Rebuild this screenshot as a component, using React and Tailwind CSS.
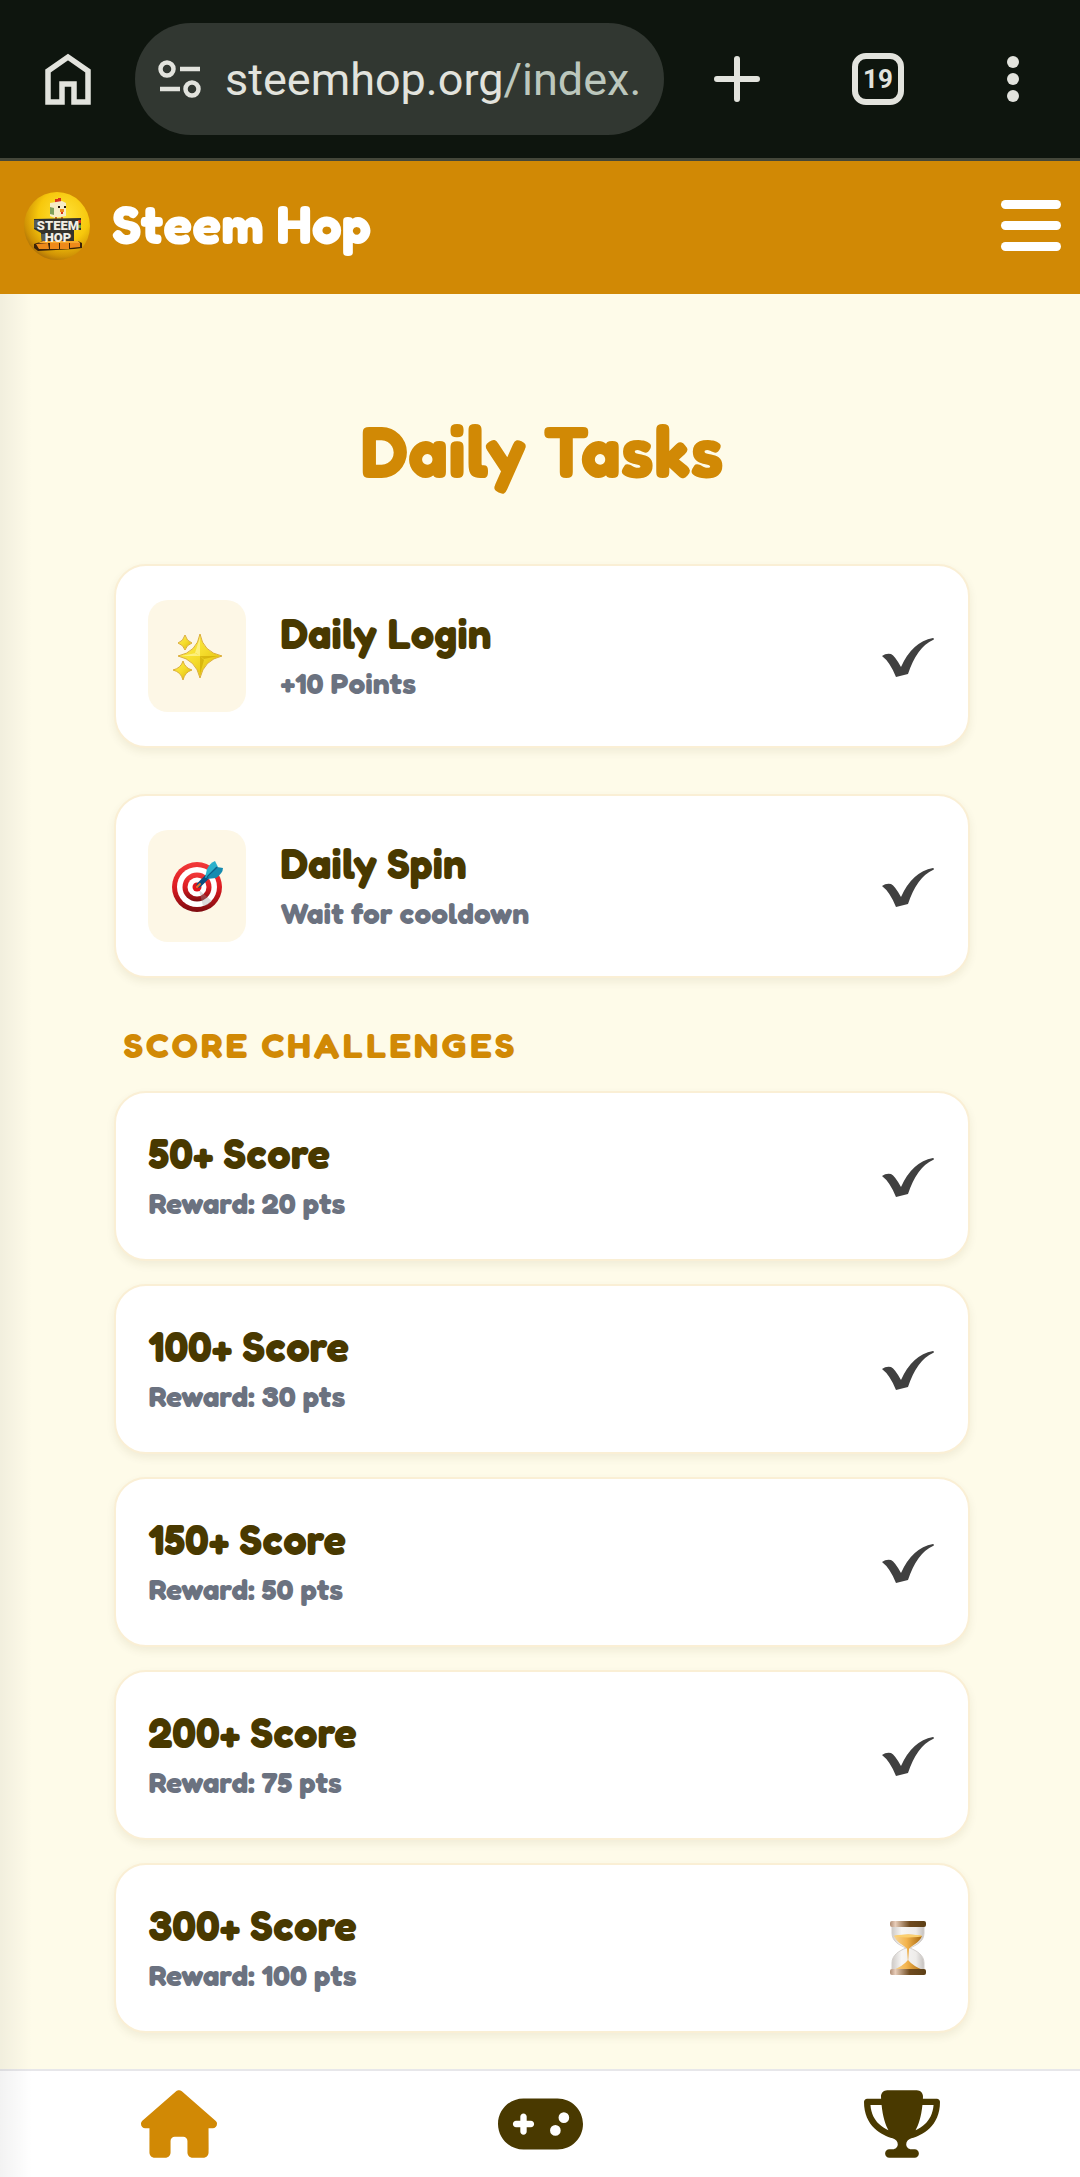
import React, { useState } from 'react';
import { FaHouse, FaGamepad, FaTrophy } from 'react-icons/fa6';

const DAILY_TASKS = [
  { id: 'login', title: 'Daily Login', note: '+10 Points', icon: Sparkles },
  { id: 'spin', title: 'Daily Spin', note: 'Wait for cooldown', icon: Target },
];

const CHALLENGES = [
  { score: 50, reward: 20, done: true },
  { score: 100, reward: 30, done: true },
  { score: 150, reward: 50, done: true },
  { score: 200, reward: 75, done: true },
  { score: 300, reward: 100, done: false },
];

const TABS = [
  { id: 'home', label: 'Home', icon: FaHouse, size: 'h-[68px] w-[76px]' },
  { id: 'play', label: 'Play', icon: FaGamepad, size: 'h-[68px] w-[85px]' },
  { id: 'ranks', label: 'Leaderboard', icon: FaTrophy, size: 'h-[68px] w-[76px]' },
];

function Sparkles() {
  return (
    <svg viewBox="0 0 52 52" className="size-[52px]" aria-hidden="true">
      <defs>
        <linearGradient id="spark" x1="0" y1="0" x2="1" y2="1">
          <stop offset="0" stopColor="#fff04f" />
          <stop offset="0.5" stopColor="#f5dc2c" />
          <stop offset="1" stopColor="#d9b200" />
        </linearGradient>
      </defs>
      <g fill="url(#spark)" stroke="#dcae3a" strokeWidth="1" strokeLinejoin="round">
        <path d="M29 4 Q32 22 51 26 Q33 30 29 48 Q25 30 7 26 Q26 22 29 4Z" />
        <path d="M14 5 Q15.500 11 21 13 Q15.500 15 14 20 Q12.500 15 7 13 Q12.500 11 14 5Z" />
        <path d="M12 31 Q14 38 21 40 Q14 42 12 50 Q10 42 2 40 Q10 38 12 31Z" />
      </g>
      <path d="M29 7 L29 26 L24 23Z M10 26 L29 26 L25 23Z" fill="#fff6a0" opacity="0.7" />
      <path d="M29 26 L47 26 L33 29Z M29 26 L29 44 L33 30Z" fill="#c9a300" opacity="0.6" />
    </svg>
  );
}

function Target() {
  return (
    <svg viewBox="0 0 52 52" className="size-[52px]" aria-hidden="true">
      <defs>
        <linearGradient id="ring" x1="0" y1="0" x2="0" y2="1">
          <stop offset="0" stopColor="#f23a3a" />
          <stop offset="0.5" stopColor="#dd1c22" />
          <stop offset="1" stopColor="#7d0b10" />
        </linearGradient>
      </defs>
      <circle cx="26" cy="27" r="25" fill="url(#ring)" />
      <circle cx="26" cy="27" r="20" fill="#fff" />
      <circle cx="26" cy="27" r="14.500" fill="url(#ring)" />
      <circle cx="26" cy="27" r="9.500" fill="#fff" />
      <path d="M28 30 L41 41 Q37 46 32 46 Z" fill="#9b9b9b" opacity="0.35" />
      <circle cx="26" cy="27" r="4.500" fill="#e0131c" />
      <path d="M28 25 L40 13" stroke="#0b4f80" strokeWidth="5" strokeLinecap="round" />
      <path d="M26 27 L29 24" stroke="#e8742a" strokeWidth="2" strokeLinecap="round" />
      <path d="M34 18 L36 9 Q39 3 44 1 L47 7 L40 16Z" fill="#2bb0cb" />
      <path d="M36 19 L46 7 L52 8 Q52 13 45 18Z" fill="#168bb0" />
      <path d="M36 17 L46 7" stroke="#0c5f88" strokeWidth="1.500" />
    </svg>
  );
}

function CheckMark() {
  return (
    <svg viewBox="0 -4 52 44" className="h-11 w-[52px]" role="img" aria-label="Completed">
      <path
        d="M0 18 Q4 15 9 16 Q13 18 19 29 Q30 4 51 0 Q53 1 51 2 Q35 9 26 36 L14 39 Q8 24 0 18Z"
        fill="#404040"
      />
    </svg>
  );
}

function Hourglass() {
  return (
    <svg viewBox="0 0 52 54" className="h-[54px] w-[52px]" role="img" aria-label="Pending">
      <defs>
        <linearGradient id="wood">
          <stop offset="0" stopColor="#b08d74" />
          <stop offset="0.15" stopColor="#e8cdb9" />
          <stop offset="0.55" stopColor="#6f4a1e" />
          <stop offset="1" stopColor="#5d4016" />
        </linearGradient>
        <linearGradient id="sand">
          <stop offset="0" stopColor="#f7d596" />
          <stop offset="0.45" stopColor="#f3b44e" />
          <stop offset="1" stopColor="#a9690f" />
        </linearGradient>
        <linearGradient id="glass">
          <stop offset="0" stopColor="#cfcbc8" />
          <stop offset="0.3" stopColor="#f7f6f5" />
          <stop offset="0.75" stopColor="#eeecea" />
          <stop offset="1" stopColor="#c5c1be" />
        </linearGradient>
      </defs>
      <path
        d="M10 5 H42 V12 C42 21 34 24 28 27 C35 30 42 34 42 42 V49 H10 V42 C10 34 17 30 24 27 C18 24 10 21 10 12Z"
        fill="url(#glass)"
        stroke="#d3cfcc"
        strokeWidth="1"
      />
      <path d="M12 15 Q26 12 40 15 C37 22 30 24 27 28 L26 42 L25 28 C22 24 15 22 12 15Z" fill="url(#sand)" />
      <ellipse cx="26" cy="15" rx="14" ry="1.500" fill="#fbd070" />
      <path d="M11 49 Q21 45 26 39 Q31 45 41 49Z" fill="url(#sand)" />
      <rect x="8" y="0" width="36" height="6" rx="2" fill="url(#wood)" />
      <rect x="8" y="48" width="36" height="6" rx="2" fill="url(#wood)" />
    </svg>
  );
}

function Logo() {
  return (
    <svg viewBox="0 0 66 68" className="h-[68px] w-[66px]" role="img" aria-label="Steem Hop logo">
      <defs>
        <radialGradient id="ball" cx="0.6" cy="0.35" r="0.7">
          <stop offset="0" stopColor="#ffe23a" />
          <stop offset="0.55" stopColor="#f7c80c" />
          <stop offset="0.85" stopColor="#d09305" />
          <stop offset="1" stopColor="#a86c08" />
        </radialGradient>
      </defs>
      <ellipse cx="33" cy="34" rx="33" ry="34" fill="url(#ball)" />
      <path d="M31 10 V7 H34 V6 H37 V11 H31Z" fill="#d8321c" />
      <path d="M26 11 L38 9 L42 11 V24 L31 26 L26 24Z" fill="#f6ecc6" />
      <path d="M26 15 L30 16 V23 L26 22Z" fill="#7fa05c" />
      <path d="M34 14 H36 V16 H34Z M40 14 H42 V16 H40Z" fill="#2a1a10" />
      <path d="M36 17 H40 V20 H36Z" fill="#f08a1c" />
      <path d="M37 20 H39 V22 H37Z" fill="#d8321c" />
      <path d="M31 25 H33 V28 H31Z M37 25 H39 V28 H37Z" fill="#d56a10" />
      <path d="M10 27 L57 26 V38 H50 V52 H18 L17 41 L10 37Z" fill="#34332c" />
      <path d="M10 28 H15 V36 H10Z M17 42 H22 V49 H18Z" fill="#555a55" />
      <rect x="54" y="28" width="3" height="3" fill="#d8321c" />
      <rect x="54" y="33" width="3" height="3" fill="#67a13a" />
      <path d="M10 52 L19 49 H54 L58 51 V56 L50 57 L14 59 L10 56Z" fill="#3a2208" />
      <path d="M12 52 L24 51 L25 57 L15 57Z M26 51 H35 V57 H26Z M36 51 H45 V57 H36Z M46 50 L56 51 V55 L46 56Z" fill="#ee8a1a" />
      <path d="M19 49 H54 L56 51 H14Z" fill="#f6a82e" />
      <text x="34" y="38" textAnchor="middle" fontFamily="Roboto, sans-serif" fontWeight="900" fontSize="13" fill="#f1eee4">
        STEEM
      </text>
      <text x="34" y="50" textAnchor="middle" fontFamily="Roboto, sans-serif" fontWeight="900" fontSize="13" fill="#f1eee4">
        HOP
      </text>
    </svg>
  );
}

function BrowserBar() {
  return (
    <div className="flex h-[161px] items-center border-b-[3px] border-[#44473a] bg-[#0e150e] font-['Roboto',sans-serif] text-[#e2e3dd]">
      <button type="button" aria-label="Home page" className="flex w-[135px] shrink-0 justify-center">
        <svg viewBox="0 0 46 52" className="h-[52px] w-[46px]" fill="none" stroke="currentColor" strokeWidth="5.500">
          <path d="M3 18 L23 4 L43 18 V49 H29 V31 H17 V49 H3Z" />
        </svg>
      </button>
      <button
        type="button"
        aria-label="Address bar"
        className="flex h-28 min-w-0 flex-1 items-center gap-6 overflow-hidden rounded-full bg-[#313731] pl-[22px]"
      >
        <svg viewBox="0 0 44 38" className="h-[38px] w-11 shrink-0" fill="none" stroke="currentColor" strokeWidth="4.500">
          <circle cx="10" cy="9" r="6.500" />
          <path d="M23 9 H43 M3 29 H23" />
          <circle cx="35" cy="29" r="6.500" />
        </svg>
        <span className="text-[45px] leading-none whitespace-nowrap">
          steemhop.org<span className="text-[#bcc7bd]">/index.</span>
        </span>
      </button>
      <button type="button" aria-label="New tab" className="flex w-[146px] shrink-0 justify-center">
        <svg viewBox="0 0 46 46" className="size-[46px]" stroke="currentColor" strokeWidth="6" strokeLinecap="round">
          <path d="M23 3 V43 M3 23 H43" />
        </svg>
      </button>
      <button type="button" aria-label="Open tabs" className="flex w-[136px] shrink-0 justify-center">
        <span className="flex size-[52px] items-center justify-center rounded-[14px] border-[6px] border-current text-[26px] font-bold">
          19
        </span>
      </button>
      <button type="button" aria-label="Browser menu" className="flex w-[134px] shrink-0 justify-center">
        <svg viewBox="0 0 12 46" className="h-[46px] w-3" fill="currentColor">
          <circle cx="6" cy="6" r="6" />
          <circle cx="6" cy="23" r="6" />
          <circle cx="6" cy="40" r="6" />
        </svg>
      </button>
    </div>
  );
}

function Card({ children }) {
  return (
    <li className="flex items-center gap-[34px] rounded-[32px] border-2 border-[#faefd5] bg-white py-[34px] pr-[34px] pl-8 shadow-[0_4px_8px_rgba(80,60,0,0.08)]">
      {children}
    </li>
  );
}

function CardText({ title, note }) {
  return (
    <div className="flex-1">
      <h3 className="text-[42px] leading-[54px] font-black text-[#493900]">{title}</h3>
      <p className="text-[30px] leading-[44px] font-bold text-[#6b7280]">{note}</p>
    </div>
  );
}

export default function App() {
  const [tab, setTab] = useState('home');

  return (
    <div className="flex min-h-screen flex-col bg-[#fefbe9] font-['Fredoka','Lato',sans-serif]">
      <BrowserBar />
      <header className="flex h-[133px] items-center bg-[#d18905] pr-[19px] pb-1 pl-6 text-white">
        <Logo />
        <span className="ml-[22px] flex-1 pb-1 text-[54px] leading-none font-bold">Steem Hop</span>
        <button type="button" aria-label="Open menu" className="flex w-[60px] flex-col gap-3">
          <span className="h-[9px] rounded-full bg-white" />
          <span className="h-[9px] rounded-full bg-white" />
          <span className="h-[9px] rounded-full bg-white" />
        </button>
      </header>

      <div className="relative flex flex-1 flex-col">
        <main className="flex-1 pt-28 pr-[10.200%] pb-8 pl-[10.600%]">
          <h1 className="mb-[68px] text-center text-[72px] leading-[90px] font-bold text-[#d18905]">Daily Tasks</h1>

          <ul className="flex flex-col gap-[46px]">
            {DAILY_TASKS.map(({ id, title, note, icon: Icon }) => (
              <Card key={id}>
                <span className="flex h-28 w-[98px] items-center justify-center rounded-[20px] bg-[#fdf7e6]">
                  <Icon />
                </span>
                <CardText title={title} note={note} />
                <CheckMark />
              </Card>
            ))}
          </ul>

          <h2 className="mt-[45px] mb-6 px-[9px] text-4xl leading-[44px] font-bold tracking-[3px] text-[#d18905] uppercase">
            Score Challenges
          </h2>

          <ul className="flex flex-col gap-[23px]">
            {CHALLENGES.map(({ score, reward, done }) => (
              <Card key={score}>
                <CardText title={`${score}+ Score`} note={`Reward: ${reward} pts`} />
                {done ? <CheckMark /> : <Hourglass />}
              </Card>
            ))}
          </ul>
        </main>

        <nav className="flex h-[108px] items-center justify-around border-t-2 border-[#e7e7ea] bg-white">
          {TABS.map(({ id, label, icon: Icon, size }) => (
            <button
              key={id}
              type="button"
              aria-label={label}
              onClick={() => setTab(id)}
              className={tab === id ? 'text-[#d18905]' : 'text-[#493900]'}
            >
              <Icon className={size} />
            </button>
          ))}
        </nav>

        {/* edge shadow of the closed side drawer */}
        <div className="pointer-events-none absolute inset-y-0 left-0 w-8 bg-linear-to-r from-black/5 to-transparent" />
      </div>
    </div>
  );
}
